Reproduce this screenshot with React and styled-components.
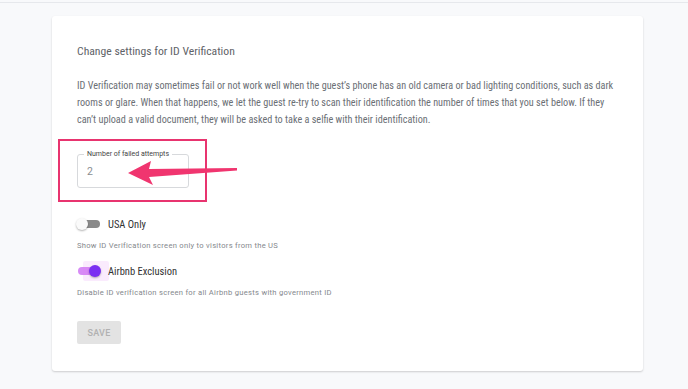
import React from "react";
import styled, { createGlobalStyle } from "styled-components";

const GlobalStyle = createGlobalStyle`
  body {
    margin: 0;
    background: #f8f9fb;
    font-family: Roboto, "Liberation Sans", sans-serif;
  }
`;

const narrow = `"Liberation Sans Narrow", "Roboto Condensed", Roboto, sans-serif`;

const Page = styled.div`
  width: 688px;
  height: 389px;
  overflow: hidden;
  padding-top: 2px;
  box-sizing: border-box;
`;

const TopLine = styled.div`
  height: 1px;
  background: #e6e8ec;
`;

const Card = styled.section`
  display: flex;
  flex-direction: column;
  align-items: flex-start;
  margin: 13px 0 0 52px;
  width: 591px;
  height: 355px;
  box-sizing: border-box;
  padding: 28px 25px 0;
  background: #fff;
  border-radius: 3px;
  box-shadow: 0 1px 2px rgba(0, 0, 0, 0.18);
`;

const Title = styled.h2`
  margin: 0;
  font-family: ${narrow};
  font-size: 11.7px;
  font-weight: 400;
  line-height: 14px;
  color: #5f6368;
`;

const Lead = styled.p`
  margin: 19px 0 0;
  font-family: ${narrow};
  font-size: 10.2px;
  line-height: 17px;
  color: #6b6f75;
`;

const Field = styled.div`
  position: relative;
  margin-top: 26px;
  width: 112px;
  height: 34px;
  box-sizing: border-box;
  border: 1px solid #d7d9dc;
  border-radius: 3px;
  display: flex;
  align-items: center;
  padding-left: 9px;
  font-size: 10.5px;
  color: #8a8d91;
`;

const FieldLabel = styled.span`
  position: absolute;
  top: -5px;
  left: 6px;
  padding: 0 3px;
  background: #fff;
  font-size: 7px;
  line-height: 9px;
  color: #444;
`;

const Highlight = styled.div`
  position: absolute;
  left: -20px;
  top: -16px;
  width: 149px;
  height: 63px;
  box-sizing: border-box;
  border: 2px solid #e8346f;
  pointer-events: none;
`;

const Arrow = styled.svg`
  position: absolute;
  left: 50px;
  top: 4px;
  overflow: visible;
`;

const Settings = styled.div`
  display: flex;
  flex-direction: column;
  gap: 13px;
  margin-top: 29px;
`;

const Setting = styled.div`
  display: flex;
  flex-direction: column;
  gap: 10px;
`;

const ToggleRow = styled.div`
  display: flex;
  align-items: center;
  gap: 8px;
  height: 14px;
`;

const Track = styled.span`
  position: relative;
  flex: none;
  width: 22px;
  height: 8px;
  margin-left: 1px;
  border-radius: 4px;
  background: ${(p) => (p.$on ? "#d78bf6" : "#8a8a8a")};
`;

const Halo = styled.span`
  position: absolute;
  top: -6px;
  left: 5px;
  width: 26px;
  height: 20px;
  background: rgba(225, 130, 245, 0.16);
  border-radius: 2px;
`;

const Thumb = styled.span`
  position: absolute;
  top: -2px;
  left: ${(p) => (p.$on ? "11px" : "-2px")};
  width: 12px;
  height: 12px;
  border-radius: 50%;
  background: ${(p) => (p.$on ? "#7b2ff2" : "#fafafa")};
  box-shadow: 0 1px 2px rgba(0, 0, 0, 0.3);
`;

const ToggleLabel = styled.span`
  position: relative;
  font-family: ${narrow};
  font-size: 10.5px;
  color: #333;
`;

const Hint = styled.div`
  font-size: 7.6px;
  line-height: 10px;
  letter-spacing: 0.28px;
  color: #85888d;
`;

const SaveButton = styled.button`
  margin-top: 23px;
  width: 44px;
  height: 23px;
  border: none;
  border-radius: 2px;
  background: #e3e3e3;
  color: #b1b1b1;
  font-family: inherit;
  font-size: 9px;
  font-weight: 500;
  letter-spacing: 0.3px;
  padding: 0;
`;

function Toggle({ on, label, hint }) {
  return (
    <Setting>
      <ToggleRow>
        <Track $on={on}>
          {on && <Halo />}
          <Thumb $on={on} />
        </Track>
        <ToggleLabel>{label}</ToggleLabel>
      </ToggleRow>
      <Hint>{hint}</Hint>
    </Setting>
  );
}

export default function App() {
  return (
    <>
      <GlobalStyle />
      <Page>
        <TopLine />
        <Card>
          <Title>Change settings for ID Verification</Title>
          <Lead>
            ID Verification may sometimes fail or not work well when the guest’s phone has an old camera or bad lighting
            conditions, such as dark rooms or glare. When that happens, we let the guest re-try to scan their
            identification the number of times that you set below. If they can’t upload a valid document, they will be
            asked to take a selfie with their identification.
          </Lead>
          <Field>
            <FieldLabel>Number of failed attempts</FieldLabel>
            2
            <Highlight />
            <Arrow width="110" height="28" viewBox="0 0 110 28">
              <polygon points="0,14 23,2 21,10 109,9 109,11.5 21,18 25,26" fill="#f0356f" />
            </Arrow>
          </Field>
          <Settings>
            <Toggle label="USA Only" hint="Show ID Verification screen only to visitors from the US" />
            <Toggle on label="Airbnb Exclusion" hint="Disable ID verification screen for all Airbnb guests with government ID" />
          </Settings>
          <SaveButton>SAVE</SaveButton>
        </Card>
      </Page>
    </>
  );
}
